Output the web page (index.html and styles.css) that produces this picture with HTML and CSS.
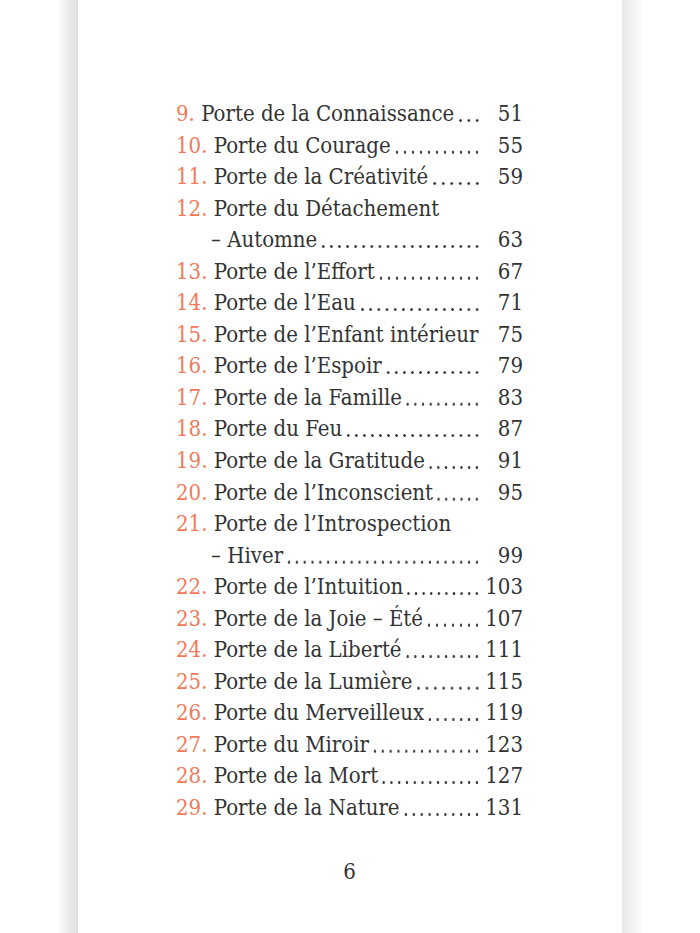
FILE: index.html
```html
<!DOCTYPE html>
<html lang="fr">
<head>
<meta charset="utf-8">
<title>Sommaire</title>
<link rel="stylesheet" href="styles.css">
</head>
<body>
<main class="page">
  <ol class="toc">
    <li class="row"><span class="entry"><span class="num">9.</span> Porte de la Connaissance</span><span class="leader"></span><span class="pg">51</span></li>
    <li class="row"><span class="entry"><span class="num">10.</span> Porte du Courage</span><span class="leader"></span><span class="pg">55</span></li>
    <li class="row"><span class="entry"><span class="num">11.</span> Porte de la Créativité</span><span class="leader"></span><span class="pg">59</span></li>
    <li class="row"><span class="entry"><span class="num">12.</span> Porte du Détachement</span></li>
    <li class="row cont"><span class="entry">– Automne</span><span class="leader"></span><span class="pg">63</span></li>
    <li class="row"><span class="entry"><span class="num">13.</span> Porte de l’Effort</span><span class="leader"></span><span class="pg">67</span></li>
    <li class="row"><span class="entry"><span class="num">14.</span> Porte de l’Eau</span><span class="leader"></span><span class="pg">71</span></li>
    <li class="row"><span class="entry"><span class="num">15.</span> Porte de l’Enfant intérieur</span><span class="leader"></span><span class="pg">75</span></li>
    <li class="row"><span class="entry"><span class="num">16.</span> Porte de l’Espoir</span><span class="leader"></span><span class="pg">79</span></li>
    <li class="row"><span class="entry"><span class="num">17.</span> Porte de la Famille</span><span class="leader"></span><span class="pg">83</span></li>
    <li class="row"><span class="entry"><span class="num">18.</span> Porte du Feu</span><span class="leader"></span><span class="pg">87</span></li>
    <li class="row"><span class="entry"><span class="num">19.</span> Porte de la Gratitude</span><span class="leader"></span><span class="pg">91</span></li>
    <li class="row"><span class="entry"><span class="num">20.</span> Porte de l’Inconscient</span><span class="leader"></span><span class="pg">95</span></li>
    <li class="row"><span class="entry"><span class="num">21.</span> Porte de l’Introspection</span></li>
    <li class="row cont"><span class="entry">– Hiver</span><span class="leader"></span><span class="pg">99</span></li>
    <li class="row"><span class="entry"><span class="num">22.</span> Porte de l’Intuition</span><span class="leader"></span><span class="pg">103</span></li>
    <li class="row"><span class="entry"><span class="num">23.</span> Porte de la Joie – Été</span><span class="leader"></span><span class="pg">107</span></li>
    <li class="row"><span class="entry"><span class="num">24.</span> Porte de la Liberté</span><span class="leader"></span><span class="pg">111</span></li>
    <li class="row"><span class="entry"><span class="num">25.</span> Porte de la Lumière</span><span class="leader"></span><span class="pg">115</span></li>
    <li class="row"><span class="entry"><span class="num">26.</span> Porte du Merveilleux</span><span class="leader"></span><span class="pg">119</span></li>
    <li class="row"><span class="entry"><span class="num">27.</span> Porte du Miroir</span><span class="leader"></span><span class="pg">123</span></li>
    <li class="row"><span class="entry"><span class="num">28.</span> Porte de la Mort</span><span class="leader"></span><span class="pg">127</span></li>
    <li class="row"><span class="entry"><span class="num">29.</span> Porte de la Nature</span><span class="leader"></span><span class="pg">131</span></li>
  </ol>
  <div class="folio">6</div>
</main>
</body>
</html>
```

FILE: styles.css
```css
html, body {
  margin: 0;
  padding: 0;
  height: 100%;
  overflow: hidden;
}
body {
  background: linear-gradient(to right,
    #ffffff 0, #ffffff 56px, #dedede 78px,
    #e6e6e6 622px, #ffffff 644px, #ffffff 100%);
  font-family: "DejaVu Serif Condensed", "DejaVu Serif", serif;
  font-stretch: condensed;
  color: #333333;
}
.page {
  width: 544px;
  height: 100%;
  margin: 0 auto;
  background: #ffffff;
  box-sizing: border-box;
  padding: 98px 99px 0 98px;
}
.toc {
  list-style: none;
  margin: 0;
  padding: 0;
  font-size: 22px;
  line-height: 31.55px;
}
.row {
  display: flex;
  white-space: nowrap;
  height: 31.55px;
}
.cont {
  padding-left: 35px;
}
.num {
  color: #f27a5a;
}
.leader {
  flex: 1;
  min-width: 0;
  margin: 0 3px 0 2px;
  background-image: radial-gradient(circle at 50% 22.2px, #3a3a3a 1.05px, rgba(58, 58, 58, 0) 1.55px);
  background-size: 8px 31.55px;
  background-repeat: round no-repeat;
  background-position: right top;
}
.pg {
  width: 39px;
  text-align: right;
}
.folio {
  margin-top: 32px;
  text-align: center;
  font-size: 22px;
  line-height: 32px;
}
```
